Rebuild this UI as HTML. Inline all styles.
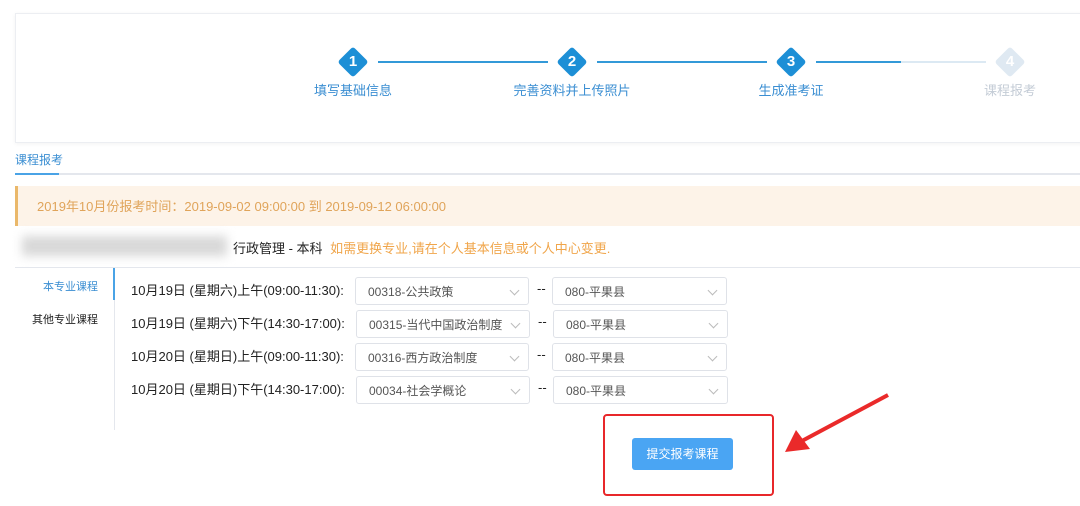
<!DOCTYPE html><html><head><meta charset="utf-8"><style>
body{margin:0;width:1080px;height:506px;background:#fff;font-family:"Liberation Sans","Noto Sans CJK SC",sans-serif;position:relative;overflow:hidden}
.a{position:absolute}
.card{left:15px;top:13px;width:1070px;height:128px;border:1px solid #eceef2;box-shadow:0 1px 4px rgba(0,0,0,.05)}
.dia{width:22px;height:22px;background:#1d8fd6;transform:rotate(45deg);border-radius:3px}
.num{width:32px;text-align:center;color:#fff;font-weight:bold;font-size:15px}
.lbl{font-size:13px;color:#3a8ed2;text-align:center;width:160px}
.line{height:2px;background:#3399d8;top:61px}
.sel{height:28px;border:1px solid #dfe2e8;border-radius:3px;font-size:12px;color:#555;line-height:28px;padding-left:12px;box-sizing:border-box}
.sel:after{content:"";position:absolute;right:10px;top:9px;width:6px;height:6px;border-right:1px solid #bbb;border-bottom:1px solid #bbb;transform:rotate(45deg)}
.rl{font-size:13px;color:#222}
</style></head><body>
<div class="a card"></div>
<div class="a line" style="left:378px;width:170px"></div>
<div class="a line" style="left:597px;width:170px"></div>
<div class="a line" style="left:816px;width:85px"></div>
<div class="a line" style="left:901px;width:85px;background:#dce9f3"></div>
<div class="a dia" style="left:342px;top:51px"></div><div class="a num" style="left:337px;top:53px">1</div>
<div class="a dia" style="left:561px;top:51px"></div><div class="a num" style="left:556px;top:53px">2</div>
<div class="a dia" style="left:780px;top:51px"></div><div class="a num" style="left:775px;top:53px">3</div>
<div class="a dia" style="left:999px;top:51px;background:#dfe9f2"></div><div class="a num" style="left:994px;top:53px">4</div>
<div class="a lbl" style="left:273px;top:80px">填写基础信息</div>
<div class="a lbl" style="left:492px;top:80px">完善资料并上传照片</div>
<div class="a lbl" style="left:711px;top:80px">生成准考证</div>
<div class="a lbl" style="left:930px;top:80px;color:#c4ccd6">课程报考</div>
<div class="a" style="left:15px;top:151px;font-size:12px;color:#3a8ed2">课程报考</div>
<div class="a" style="left:15px;top:173px;width:1065px;height:2px;background:#e4e7ed"></div>
<div class="a" style="left:15px;top:173px;width:44px;height:2px;background:#4aa3e6"></div>
<div class="a" style="left:15px;top:186px;width:1065px;height:40px;background:#fdf3e8;border-left:3px solid #eab86a;box-sizing:border-box"></div>
<div class="a" style="left:37px;top:196px;font-size:13px;color:#e0a45a">2019年10月份报考时间：2019-09-02 09:00:00 到 2019-09-12 06:00:00</div>
<div class="a" style="left:22px;top:236px;width:205px;height:20px;background:#d8d8d8;filter:blur(5px)"></div>
<div class="a" style="left:233px;top:238px;font-size:13px;color:#222">行政管理 - 本科 <span style="color:#f0a54a;margin-left:4px">如需更换专业,请在个人基本信息或个人中心变更.</span></div>
<div class="a" style="left:15px;top:267px;width:1065px;height:1px;background:#e4e7ed"></div>
<div class="a" style="left:114px;top:268px;width:1px;height:162px;background:#e4e7ed"></div>
<div class="a" style="left:113px;top:268px;width:2px;height:32px;background:#4aa3e6"></div>
<div class="a" style="left:43px;top:278px;font-size:11px;color:#3a8ed2">本专业课程</div>
<div class="a" style="left:32px;top:311px;font-size:11px;color:#222">其他专业课程</div>
<div class="a rl" style="left:131px;top:280px">10月19日 (星期六)上午(09:00-11:30):</div>
<div class="a rl" style="left:131px;top:313px">10月19日 (星期六)下午(14:30-17:00):</div>
<div class="a rl" style="left:131px;top:346px">10月20日 (星期日)上午(09:00-11:30):</div>
<div class="a rl" style="left:131px;top:379px">10月20日 (星期日)下午(14:30-17:00):</div>
<div class="a sel" style="left:355px;top:277px;width:174px">00318-公共政策</div>
<div class="a sel" style="left:356px;top:310px;width:174px">00315-当代中国政治制度</div>
<div class="a sel" style="left:355px;top:343px;width:174px">00316-西方政治制度</div>
<div class="a sel" style="left:356px;top:376px;width:174px">00034-社会学概论</div>
<div class="a rl" style="left:537px;top:281px">--</div><div class="a rl" style="left:538px;top:314px">--</div><div class="a rl" style="left:537px;top:347px">--</div><div class="a rl" style="left:538px;top:380px">--</div>
<div class="a sel" style="left:552px;top:277px;width:175px">080-平果县</div>
<div class="a sel" style="left:553px;top:310px;width:175px">080-平果县</div>
<div class="a sel" style="left:552px;top:343px;width:175px">080-平果县</div>
<div class="a sel" style="left:553px;top:376px;width:175px">080-平果县</div>
<div class="a" style="left:603px;top:414px;width:171px;height:82px;border:2px solid #e8272a;border-radius:4px;box-sizing:border-box"></div>
<div class="a" style="left:632px;top:438px;width:101px;height:32px;background:#4aa5f3;border-radius:3px;color:#fff;font-size:12px;text-align:center;line-height:32px">提交报考课程</div>
<svg class="a" style="left:0;top:0" width="1080" height="506"><line x1="888" y1="395" x2="800" y2="442" stroke="#ea2a2a" stroke-width="4"/><polygon points="785,452 796,430 810,449" fill="#ea2a2a"/></svg>
</body></html>
